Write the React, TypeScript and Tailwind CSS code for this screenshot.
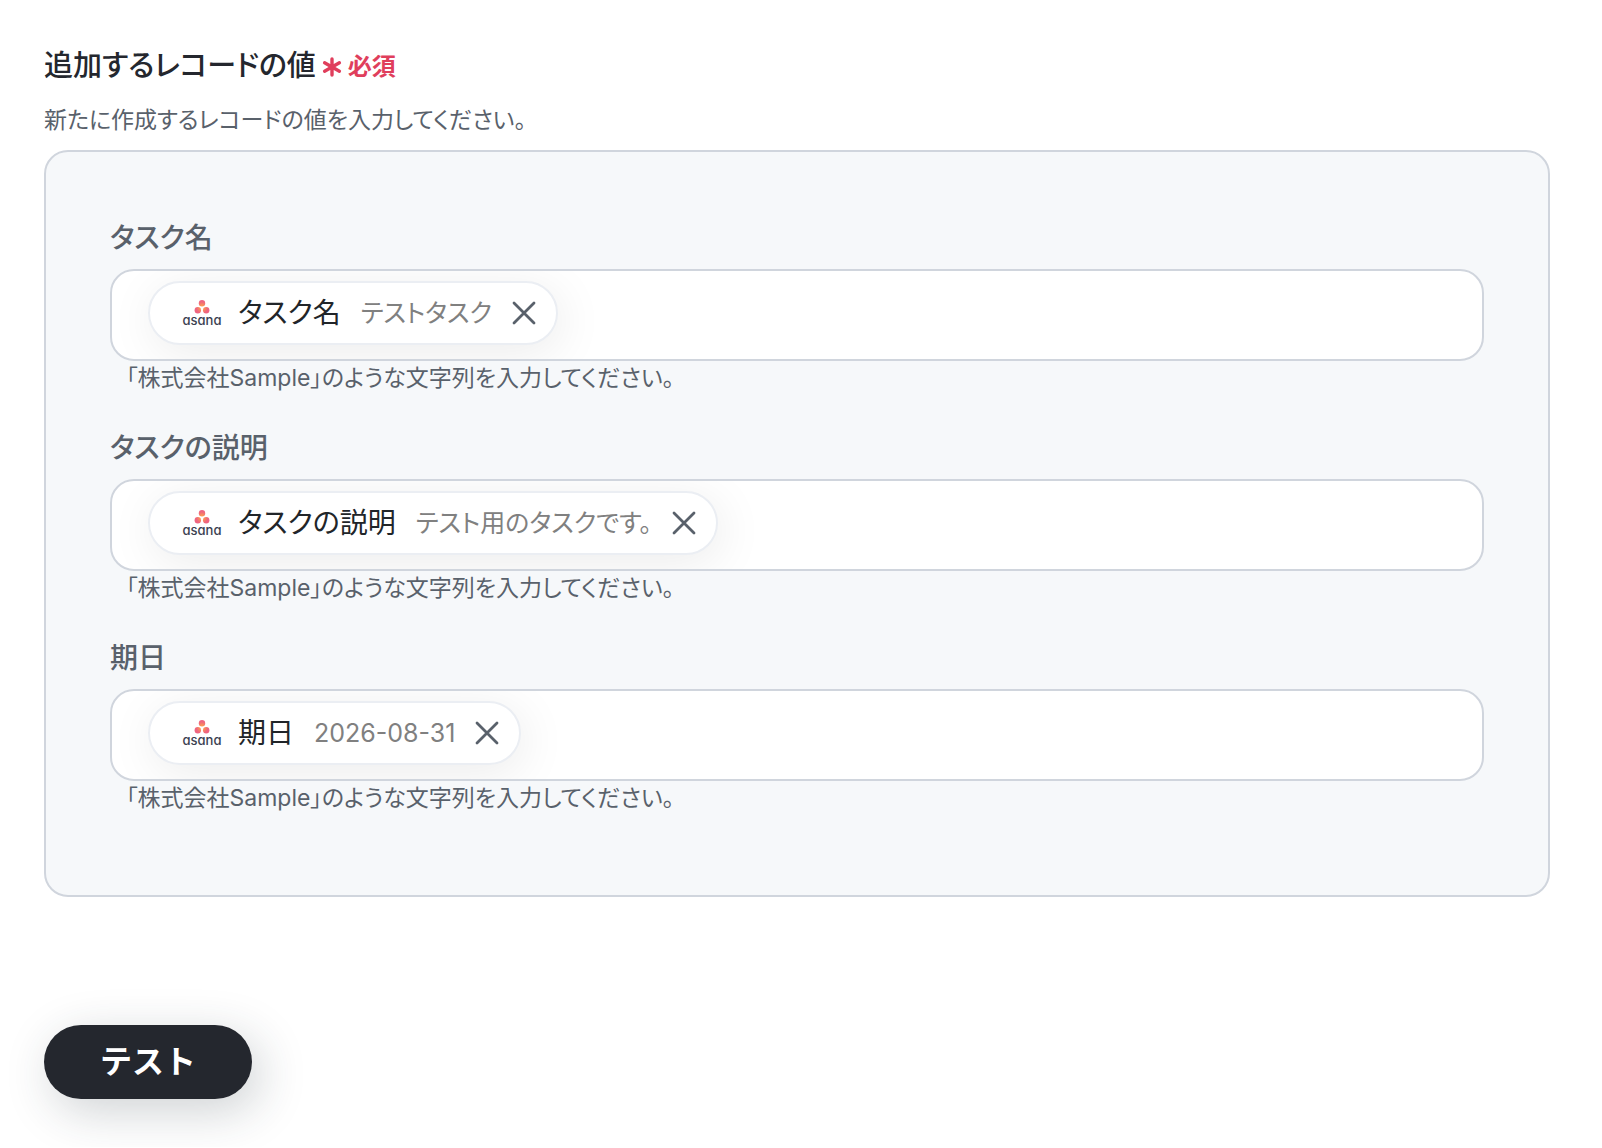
import { useState } from "react";

type Field = { id: string; label: string; value: string };

const FIELDS: Field[] = [
  { id: "task-name", label: "タスク名", value: "テストタスク" },
  { id: "task-description", label: "タスクの説明", value: "テスト用のタスクです。" },
  { id: "due-date", label: "期日", value: "2026-08-31" },
];

function AsanaLogo() {
  return (
    <span className="flex w-10 flex-col items-center">
      <svg viewBox="0 0 16 15" className="h-[15px] w-4" aria-hidden="true">
        <defs>
          <radialGradient id="asana-dots" gradientUnits="userSpaceOnUse" cx="8" cy="7.6" r="9">
            <stop offset="0" stopColor="#ffb040" />
            <stop offset="0.3" stopColor="#f98d5c" />
            <stop offset="0.65" stopColor="#ee6480" />
          </radialGradient>
        </defs>
        <g fill="url(#asana-dots)">
          <circle cx="8" cy="3.3" r="3.2" />
          <circle cx="3.8" cy="10.3" r="3.2" />
          <circle cx="12.2" cy="10.3" r="3.2" />
        </g>
      </svg>
      <span className="text-[13px] leading-[11px] font-medium text-[#3b4150] [font-feature-settings:'cv11']">
        asana
      </span>
    </span>
  );
}

function ValueChip({ field, onRemove }: { field: Field; onRemove: () => void }) {
  return (
    <div className="flex h-16 shrink-0 items-center rounded-full border-2 border-[#ebeef3] bg-white pr-4 pl-8 shadow-[4px_8px_48px_rgba(0,0,0,0.08)]">
      <AsanaLogo />
      <span className="ml-4 text-[28px] leading-10 text-[#212529]">{field.label}</span>
      <span className="ml-5 text-[25px] leading-9 text-[#808080]">{field.value}</span>
      <button type="button" aria-label={`${field.label}を削除`} onClick={onRemove} className="ml-4 p-1">
        <svg viewBox="0 0 24 24" className="size-6" fill="none" stroke="#59616b" strokeWidth="2.8" strokeLinecap="round" aria-hidden="true">
          <path d="M2 2 22 22M22 2 2 22" />
        </svg>
      </button>
    </div>
  );
}

function RecordField({ field }: { field: Field }) {
  const [filled, setFilled] = useState(true);
  return (
    <div>
      <label htmlFor={field.id} className="mb-2 block text-[28px] leading-[45px] font-medium text-[#59616b]">
        {field.label}
      </label>
      <div className="flex h-[92px] items-start overflow-hidden rounded-3xl border-2 border-[#d0d5dd] bg-white pt-[10px] pr-9 pl-9">
        {filled && <ValueChip field={field} onRemove={() => setFilled(false)} />}
        <input
          id={field.id}
          type="text"
          aria-describedby={`${field.id}-hint`}
          className="h-16 min-w-0 flex-1 bg-transparent px-4 text-[28px] outline-none"
        />
      </div>
      <p id={`${field.id}-hint`} className="pl-4 text-[23px] leading-[34px] text-[#59616b]">
        「株式会社Sample」のような文字列を入力してください。
      </p>
    </div>
  );
}

export default function App() {
  return (
    <main
      lang="ja"
      className="bg-white pt-[43px] pr-[52px] pb-12 pl-11 font-['Inter','Noto_Sans_CJK_JP',sans-serif] [font-feature-settings:'palt']"
    >
      <form onSubmit={(e) => e.preventDefault()}>
        <h1 className="flex items-center text-[29px] leading-[46px] font-medium text-[#24272e]">
          追加するレコードの値
          <span className="ml-[6px] flex items-center gap-[6px] pt-[2px] text-[24px] leading-[44px] font-bold text-[#e03e5c]">
            <svg viewBox="0 0 20 20" className="size-5" fill="none" stroke="currentColor" strokeWidth="3.4" strokeLinecap="round" aria-hidden="true">
              <path d="M10 2V18M2.6 5.8 17.4 14.2M17.4 5.8 2.6 14.2" />
            </svg>
            必須
          </span>
        </h1>
        <p className="mt-[14px] mb-[13px] text-[23px] leading-[34px] text-[#59616b]">
          新たに作成するレコードの値を入力してください。
        </p>
        <div className="flex flex-col gap-[31px] rounded-3xl border-2 border-[#d0d5dd] bg-[#f6f8fa] px-16 pt-16 pb-20">
          {FIELDS.map((field) => (
            <RecordField key={field.id} field={field} />
          ))}
        </div>
        <button
          type="submit"
          className="mt-32 h-[74px] rounded-full bg-[#24272e] px-14 text-[32px] leading-10 font-bold text-white shadow-[8px_12px_48px_rgba(36,50,60,0.22)] [font-feature-settings:normal]"
        >
          テスト
        </button>
      </form>
    </main>
  );
}
